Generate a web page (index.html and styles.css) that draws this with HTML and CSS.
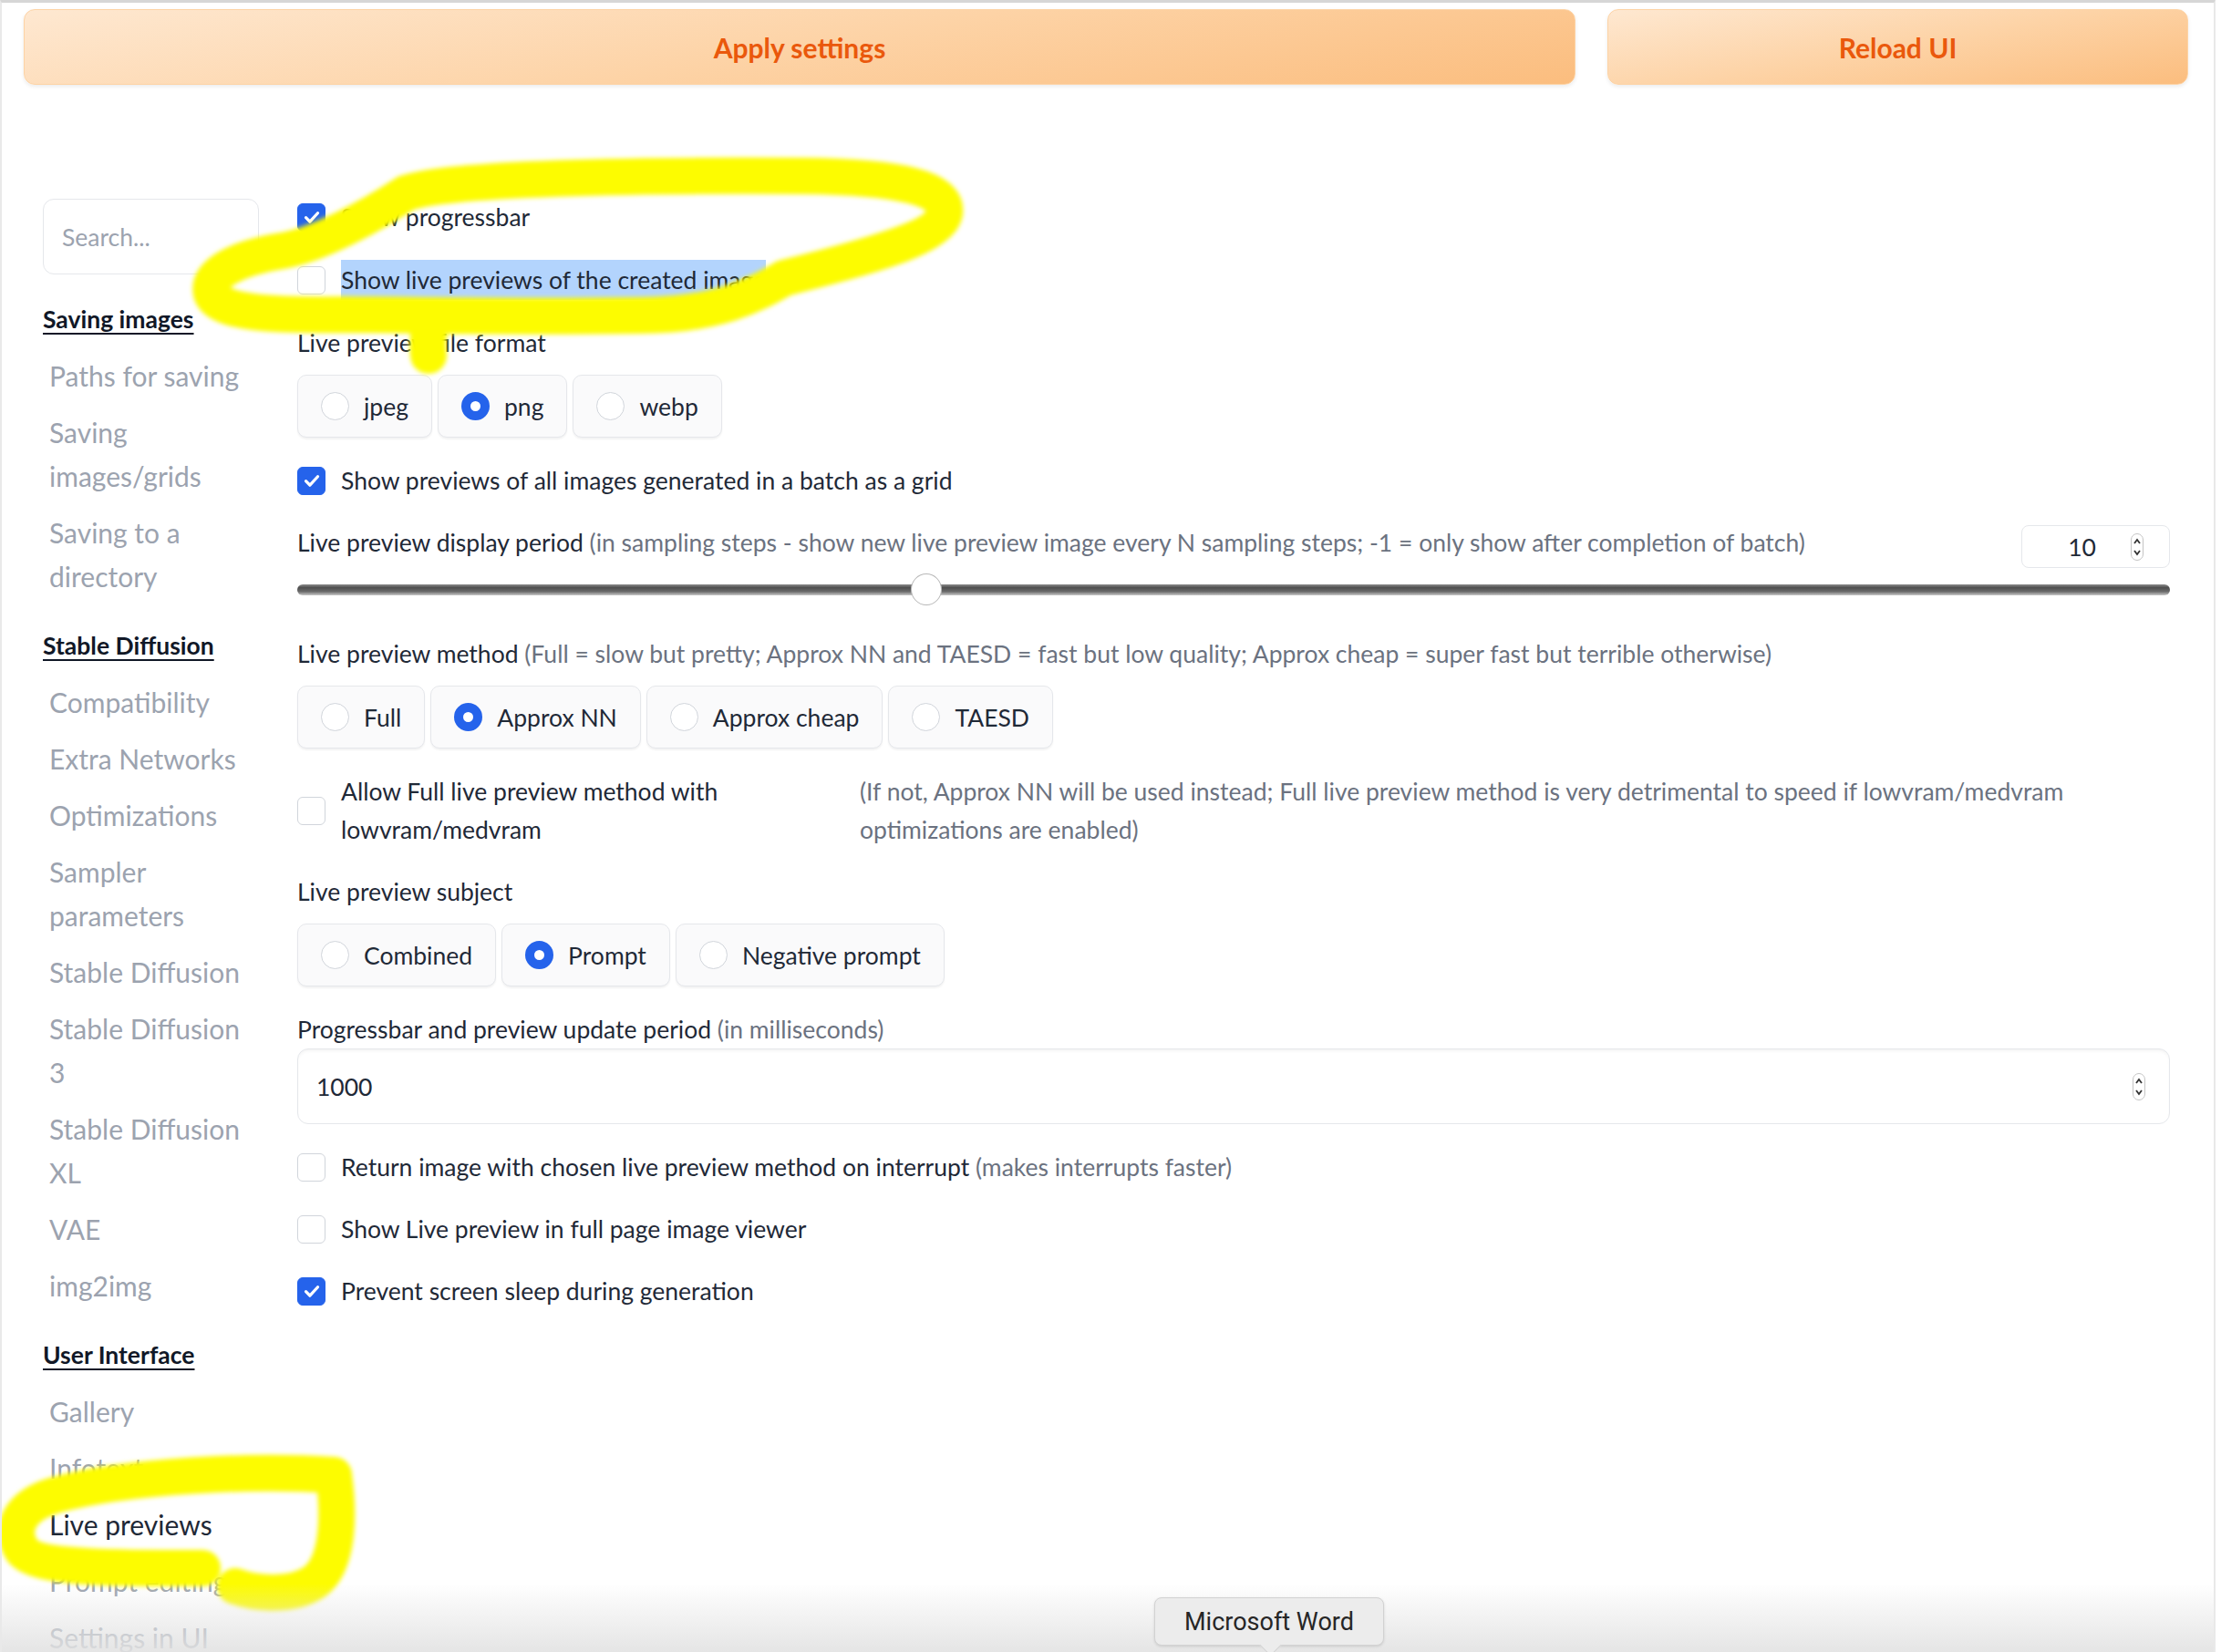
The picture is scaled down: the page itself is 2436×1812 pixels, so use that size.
FILE: index.html
```html
<!DOCTYPE html>
<html lang="en">
<head>
    <meta charset="UTF-8">
    <title>Settings - Live previews</title>
    <link rel="stylesheet" href="styles.css">
</head>
<body>
<div class="window">
    <div class="actions">
        <button class="btn-orange apply">Apply settings</button>
        <button class="btn-orange reload">Reload UI</button>
    </div>

    <div class="settings">
        <nav class="sidebar">
            <input class="search" type="text" placeholder="Search...">
            <div class="nav-head">Saving images</div>
            <a class="nav-item">Paths for saving</a>
            <a class="nav-item">Saving images/grids</a>
            <a class="nav-item">Saving to a directory</a>
            <div class="nav-head">Stable Diffusion</div>
            <a class="nav-item">Compatibility</a>
            <a class="nav-item">Extra Networks</a>
            <a class="nav-item">Optimizations</a>
            <a class="nav-item">Sampler parameters</a>
            <a class="nav-item">Stable Diffusion</a>
            <a class="nav-item">Stable Diffusion 3</a>
            <a class="nav-item">Stable Diffusion XL</a>
            <a class="nav-item">VAE</a>
            <a class="nav-item">img2img</a>
            <div class="nav-head">User Interface</div>
            <a class="nav-item">Gallery</a>
            <a class="nav-item">Infotext</a>
            <a class="nav-item active">Live previews</a>
            <a class="nav-item">Prompt editing</a>
            <a class="nav-item">Settings in UI</a>
        </nav>

        <main class="panel">
            <div class="check-row">
                <span class="box checked"><svg viewBox="0 0 16 16"><path d="M4 8.4l2.7 2.8L12 5.4"/></svg></span>
                <span>Show progressbar</span>
            </div>
            <div class="check-row">
                <span class="box"></span>
                <span class="selected-text">Show live previews of the created image</span>
            </div>

            <div class="block">
                <div class="block-label">Live preview file format</div>
                <div class="radio-group">
                    <div class="radio-item"><span class="dot"></span>jpeg</div>
                    <div class="radio-item"><span class="dot on"></span>png</div>
                    <div class="radio-item"><span class="dot"></span>webp</div>
                </div>
            </div>

            <div class="check-row">
                <span class="box checked"><svg viewBox="0 0 16 16"><path d="M4 8.4l2.7 2.8L12 5.4"/></svg></span>
                <span>Show previews of all images generated in a batch as a grid</span>
            </div>

            <div class="block slider-block">
                <div class="slider-head">
                    <div class="block-label">Live preview display period <span class="info">(in sampling steps - show new live preview image every N sampling steps; -1 = only show after completion of batch)</span></div>
                    <div class="num-box">
                        <span>10</span>
                        <svg class="spin" width="14" height="30" viewBox="0 0 14 30"><rect x="0.5" y="0.5" width="13" height="29" rx="6.5"/><path d="M4 11l3-4 3 4M4 19l3 4 3-4"/></svg>
                    </div>
                </div>
                <div class="range">
                    <div class="track"></div>
                    <div class="thumb" style="--pct: 0.3333"></div>
                </div>
            </div>

            <div class="block">
                <div class="block-label">Live preview method <span class="info">(Full = slow but pretty; Approx NN and TAESD = fast but low quality; Approx cheap = super fast but terrible otherwise)</span></div>
                <div class="radio-group">
                    <div class="radio-item"><span class="dot"></span>Full</div>
                    <div class="radio-item"><span class="dot on"></span>Approx NN</div>
                    <div class="radio-item"><span class="dot"></span>Approx cheap</div>
                    <div class="radio-item"><span class="dot"></span>TAESD</div>
                </div>
            </div>

            <div class="allow-row">
                <div class="check-row allow-main">
                    <span class="box"></span>
                    <span class="allow-text">Allow Full live preview method with lowvram/medvram</span>
                </div>
                <div class="info allow-info">(If not, Approx NN will be used instead; Full live preview method is very detrimental to speed if lowvram/medvram optimizations are enabled)</div>
            </div>

            <div class="block">
                <div class="block-label">Live preview subject</div>
                <div class="radio-group">
                    <div class="radio-item"><span class="dot"></span>Combined</div>
                    <div class="radio-item"><span class="dot on"></span>Prompt</div>
                    <div class="radio-item"><span class="dot"></span>Negative prompt</div>
                </div>
            </div>

            <div class="block">
                <div class="block-label tight">Progressbar and preview update period <span class="info">(in milliseconds)</span></div>
                <div class="text-input">
                    <span>1000</span>
                    <svg class="spin" width="14" height="30" viewBox="0 0 14 30"><rect x="0.5" y="0.5" width="13" height="29" rx="6.5"/><path d="M4 11l3-4 3 4M4 19l3 4 3-4"/></svg>
                </div>
            </div>

            <div class="check-row">
                <span class="box"></span>
                <span>Return image with chosen live preview method on interrupt <span class="info">(makes interrupts faster)</span></span>
            </div>
            <div class="check-row">
                <span class="box"></span>
                <span>Show Live preview in full page image viewer</span>
            </div>
            <div class="check-row">
                <span class="box checked"><svg viewBox="0 0 16 16"><path d="M4 8.4l2.7 2.8L12 5.4"/></svg></span>
                <span>Prevent screen sleep during generation</span>
            </div>
        </main>
    </div>

    <!-- highlighter marks drawn over the screenshot -->
    <svg class="marker" width="2436" height="1812" viewBox="0 0 2436 1812">
        <defs>
            <filter id="soft"><feGaussianBlur stdDeviation="2.5"/></filter>
        </defs>
        <g filter="url(#soft)">
            <path d="M860 305 C830 322 790 346 700 346 C580 348 460 346 380 345 C300 346 240 344 232 322 C226 300 260 283 310 275 C350 268 405 238 445 212 C490 195 700 192 880 193 C990 194 1040 207 1036 234 C1030 262 940 285 860 305 M478 346 C470 358 468 374 470 390"/>
            <path d="M222 1720 C140 1720 40 1722 24 1700 C10 1678 20 1652 60 1640 C140 1618 280 1612 366 1618"/>
            <path d="M366 1618 C372 1660 372 1715 345 1735 C320 1752 280 1748 258 1740"/>
        </g>
    </svg>

    <div class="dock-fade"></div>
    <div class="tooltip">Microsoft Word</div>
</div>
</body>
</html>
```

FILE: styles.css
```css
* {
    box-sizing: border-box;
}
html, body {
    margin: 0;
    background: #fff;
}
body {
    font-family: Lato, "Noto Sans", sans-serif;
    color: #1f2937;
}
.window {
    position: relative;
    width: 2430px;
    height: 1812px;
    overflow: hidden;
    border-top: 3px solid #d6d6d6;
    border-left: 2px solid #e9e9e9;
    border-right: 2px solid #e9e9e9;
}

/* top buttons */
.actions {
    display: flex;
    gap: 35px;
    padding: 7px 0 0 24px;
}
.btn-orange {
    height: 83px;
    border: 1px solid #fdd3a5;
    border-radius: 12px;
    background: linear-gradient(170deg, #fee8d1 0%, #fdd3a6 50%, #fbbd7e 100%);
    box-shadow: 0 2px 4px rgba(0, 0, 0, 0.08);
    color: #ea580c;
    font-family: Lato, sans-serif;
    font-size: 30px;
    font-weight: 700;
}
.apply {
    width: 1702px;
}
.reload {
    width: 637px;
}

/* layout */
.settings {
    display: flex;
    gap: 42px;
    margin-top: 124px;
    padding-left: 45px;
}
.sidebar {
    width: 237px;
    flex: none;
    display: flex;
    flex-direction: column;
}
.search {
    width: 237px;
    height: 83px;
    margin-top: 1px;
    padding: 0 0 0 20px;
    border: 1px solid #e5e7eb;
    border-radius: 12px;
    font-family: Lato, sans-serif;
    font-size: 26.5px;
    color: #374151;
}
.search::placeholder {
    color: #9ca3af;
}
.nav-head {
    margin-top: 14px;
    padding: 7px 0;
    line-height: 48px;
    font-size: 26.5px;
    font-weight: 700;
    color: #111827;
    text-decoration: underline;
    text-underline-offset: 5px;
    text-decoration-thickness: 2px;
}
.search + .nav-head {
    margin-top: 18px;
}
.nav-item {
    display: block;
    padding: 7px 0 7px 7px;
    line-height: 48px;
    font-size: 30px;
    color: #9ca3af;
}
.nav-item.active {
    color: #1f2937;
}

.panel {
    width: 2054px;
    display: flex;
    flex-direction: column;
    gap: 26px;
    font-size: 26.5px;
}

/* checkboxes */
.check-row {
    display: flex;
    align-items: center;
    gap: 17px;
    line-height: 42px;
}
.box {
    width: 31px;
    height: 31px;
    flex: none;
    border: 1px solid #d1d5db;
    border-radius: 6px;
    background: #fff;
    display: flex;
    align-items: center;
    justify-content: center;
}
.box.checked {
    background: #2563eb;
    border-color: #2563eb;
}
.box svg {
    width: 26px;
    height: 26px;
    fill: none;
    stroke: #fff;
    stroke-width: 2;
    stroke-linecap: round;
    stroke-linejoin: round;
}
.selected-text {
    background: #b3d4fd;
    padding: 1px 0;
}
.info {
    color: #6b7280;
}

/* labelled blocks */
.block-label {
    line-height: 42px;
    margin-bottom: 14px;
}
.block-label.tight {
    margin-bottom: 0;
}
.radio-group {
    display: flex;
    gap: 6px;
}
.radio-item {
    height: 69px;
    padding: 0 25px;
    display: flex;
    align-items: center;
    gap: 16px;
    border: 1px solid #e5e7eb;
    border-radius: 10px;
    background: #fafafb;
    box-shadow: 0 2px 2px rgba(0, 0, 0, 0.05);
}
.dot {
    width: 31px;
    height: 31px;
    border: 1px solid #d1d5db;
    border-radius: 50%;
    background: #fff;
}
.dot.on {
    border: 10px solid #2563eb;
}

/* slider */
.slider-block {
    padding-bottom: 6px;
}
.slider-head {
    display: flex;
    justify-content: space-between;
    align-items: flex-start;
}
.slider-head .block-label {
    margin-bottom: 0;
}
.num-box {
    width: 163px;
    height: 47px;
    margin: 2px 0 0 0;
    padding-right: 28px;
    display: flex;
    align-items: center;
    justify-content: flex-end;
    gap: 38px;
    border: 1px solid #e5e7eb;
    border-radius: 8px;
}
.spin rect {
    fill: #fff;
    stroke: #c4c4c4;
}
.spin path {
    fill: none;
    stroke: #333;
    stroke-width: 1.8;
}
.range {
    position: relative;
    height: 35px;
    margin-top: 6px;
}
.track {
    position: relative;
    top: 12px;
    height: 12px;
    border-radius: 6px;
    background: linear-gradient(to bottom, #8c8c8c 0%, #4f4f4f 30%, #6a6a6a 65%, #c9c9c9 100%);
}
.thumb {
    position: absolute;
    top: 0;
    left: calc(var(--pct) * (100% - 34px));
    width: 34px;
    height: 35px;
    border: 1px solid #b8b8b8;
    border-radius: 50%;
    background: #fff;
}

/* allow row */
.allow-row {
    display: flex;
    align-items: center;
}
.allow-main {
    width: 617px;
    flex: none;
}
.allow-text {
    max-width: 440px;
}
.allow-info {
    flex: 1;
    line-height: 42px;
    padding-right: 100px;
}

/* text input */
.text-input {
    height: 83px;
    padding: 0 26px 0 20px;
    display: flex;
    align-items: center;
    justify-content: space-between;
    border: 1px solid #e5e7eb;
    border-radius: 12px;
    box-shadow: inset 0 3px 4px -2px rgba(0, 0, 0, 0.07);
}

/* things over the screenshot */
.marker {
    position: absolute;
    top: -3px;
    left: -2px;
    pointer-events: none;
}
.marker path {
    fill: none;
    stroke: #fdfc00;
    stroke-width: 40;
    stroke-linecap: round;
    stroke-linejoin: round;
}
.dock-fade {
    position: absolute;
    left: 0;
    right: 0;
    bottom: 0;
    height: 75px;
    background: linear-gradient(to bottom, rgba(232, 232, 232, 0), rgba(226, 226, 226, 0.9));
}
.tooltip {
    position: absolute;
    left: 1264px;
    top: 1749px;
    width: 252px;
    height: 53px;
    display: flex;
    align-items: center;
    justify-content: center;
    background: #ececec;
    border: 1px solid #d2d2d2;
    border-radius: 8px;
    box-shadow: 0 1px 3px rgba(0, 0, 0, 0.12);
    font-family: Roboto, sans-serif;
    font-size: 27px;
    color: #262626;
}
.tooltip::after {
    content: "";
    position: absolute;
    left: 118px;
    bottom: -9px;
    width: 16px;
    height: 16px;
    background: #ececec;
    border-right: 1px solid #d2d2d2;
    border-bottom: 1px solid #d2d2d2;
    transform: rotate(45deg);
}
```
